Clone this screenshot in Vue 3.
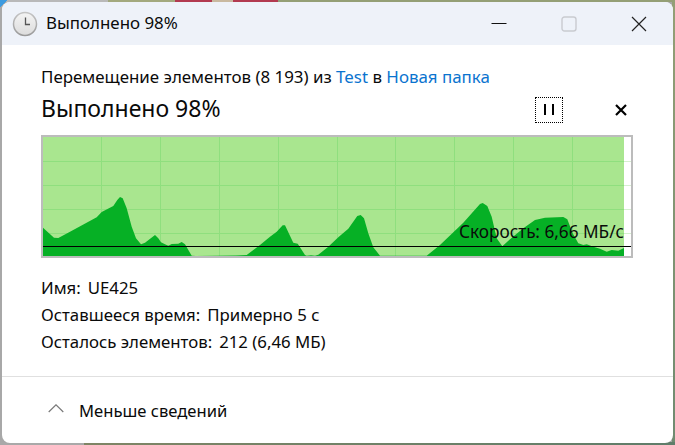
<script setup>
const graphPath =
  "M43 227.7 L54 237.7 L58.3 238 L70 231.7 L96.7 217.3 L101.7 212 L113.3 206 L117.3 200 L120 197 L122.7 198.3 L126.7 208.3 L131.7 226.7 L136 238.3 L141 244.3 L145 242.7 L155 235 L158.3 238.3 L161 242.3 L165 244.3 L168.3 245.7 L171.7 244 L178.3 243.7 L181.7 242 L185 244.3 L191.7 255.7 L196 256 " +
  "L236 255.5 L246.7 255 L260 245 L270 236.7 L276.7 231.7 L282.7 225.3 L285 225.3 L293.3 242.7 L297.7 243.7 L305 255 L306.7 255.7 L311 255.3 L315 255.7 L318.3 254.7 L328.3 246.7 L338.3 237.3 L348.3 228.7 L357.3 216 L360.7 215 L364 218.3 L368.3 233.3 L373.3 247.3 L380 255.7 " +
  "L426.7 255.7 L440 245 L463.3 222.7 L480 204 L482.7 203 L487.3 206 L491.7 216.7 L496.7 238.3 L502.3 246.3 L510 239.3 L523.3 228.3 L535 220 L545 217.7 L563.3 217 L567.3 219.3 L572.7 233.3 L578.3 243.3 L583.3 245 L586.7 244.3 L593.3 246.7 L600 248.7 L606.7 251.7 L611.7 250 L618.3 250.7 L624 248 L624 256 L43 256 Z";

const verticals = [101.5, 160.5, 219.5, 278.5, 337.5, 395.5, 454.5, 513.5, 572.5];
const horizontals = [161.5, 185.5, 209.5, 233.5];
</script>

<template>
  <div class="desktop">
    <div class="window">
      <header class="titlebar">
        <svg class="clock" width="26" height="26" viewBox="0 0 26 26">
          <defs>
            <linearGradient id="rim" x1="0" y1="0" x2="0" y2="1">
              <stop offset="0" stop-color="#c4c4c4" />
              <stop offset="1" stop-color="#9a9a9a" />
            </linearGradient>
            <linearGradient id="face" x1="0" y1="0" x2="0" y2="1">
              <stop offset="0" stop-color="#f4f4f4" />
              <stop offset="1" stop-color="#dcdcdc" />
            </linearGradient>
          </defs>
          <circle cx="13" cy="13" r="11.5" fill="url(#face)" stroke="url(#rim)" stroke-width="1.5" />
          <path d="M13.5 6.5 V13.5 H18" fill="none" stroke="#555" stroke-width="1.3" />
        </svg>
        <span class="title">Выполнено 98%</span>
        <div class="controls">
          <span class="ctl">
            <svg width="16" height="16" viewBox="0 0 16 16"><path d="M0.5 7.5 H15.5" stroke="#111" stroke-width="1" /></svg>
          </span>
          <span class="ctl">
            <svg width="16" height="16" viewBox="0 0 16 16"><rect x="1" y="1" width="14" height="14" rx="2.5" fill="none" stroke="#c9cbd0" stroke-width="1.4" /></svg>
          </span>
          <span class="ctl">
            <svg width="16" height="16" viewBox="0 0 16 16"><path d="M1 1 L15 15 M15 1 L1 15" stroke="#222" stroke-width="1.2" /></svg>
          </span>
        </div>
      </header>

      <main class="content">
        <p class="path">
          Перемещение элементов (8 193) из <a class="link">Test</a> в <a class="link">Новая папка</a>
        </p>
        <div class="status-row">
          <h1 class="status">Выполнено 98%</h1>
          <button class="pause">
            <svg width="10" height="11" viewBox="0 0 10 11"><path d="M1 0 V11 M9 0 V11" stroke="#000" stroke-width="2" /></svg>
          </button>
          <button class="cancel">
            <svg width="12" height="12" viewBox="0 0 12 12"><path d="M1 1 L11 11 M11 1 L1 11" stroke="#000" stroke-width="2.2" /></svg>
          </button>
        </div>

        <div class="graph">
          <svg width="588" height="119" viewBox="43 137 588 119">
            <rect x="43" y="137" width="581" height="119" fill="#a9e68f" />
            <path v-for="y in horizontals" :key="y" :d="`M43 ${y} H624`" stroke="#8fdf7e" stroke-width="1" />
            <path v-for="y in horizontals" :key="'w' + y" :d="`M624 ${y} H631`" stroke="#d6f0d0" stroke-width="1" />
            <path v-for="x in verticals" :key="x" :d="`M${x} 137 V256`" stroke="#8fdf7e" stroke-width="1" />
            <path :d="graphPath" fill="#06b025" />
            <path d="M43 246.5 H631" stroke="#000" stroke-width="1" />
          </svg>
          <span class="speed">Скорость: 6,66 МБ/с</span>
        </div>

        <dl class="details">
          <div class="row"><dt>Имя:</dt><dd>UE425</dd></div>
          <div class="row"><dt>Оставшееся время:</dt><dd>Примерно 5 с</dd></div>
          <div class="row"><dt>Осталось элементов:</dt><dd>212 (6,46 МБ)</dd></div>
        </dl>
      </main>

      <footer class="footer">
        <svg class="chevron" width="16" height="9" viewBox="0 0 16 9"><path d="M0.7 8 L8 0.8 L15.3 8" fill="none" stroke="#7a7a7a" stroke-width="1.2" /></svg>
        <span>Меньше сведений</span>
      </footer>
    </div>
  </div>
</template>

<style>
html,
body {
  margin: 0;
  overflow: hidden;
}
</style>

<style scoped>
.desktop {
  width: 675px;
  height: 445px;
  box-sizing: border-box;
  padding: 2px;
  background:
    linear-gradient(135deg, #3d9be0 0 5px, transparent 5px) 0 0 no-repeat,
    linear-gradient(90deg, #b9b9b9 0 108px, #a3a97e 108px 175px, #b23a50 175px 212px, #c9b9a0 212px 233px, #b23a50 233px 278px, #949f76 278px) 0 0 / 100% 2px no-repeat,
    linear-gradient(90deg, #a9a9a9 0 84px, #7f8565 84px, #5f7d6a 100%) 0 100% / 100% 3px no-repeat,
    linear-gradient(180deg, #949f76, #6f8a70) 100% 0 / 3px 100% no-repeat,
    #a8a8a8;
  font-family: "Noto Sans", "Open Sans", sans-serif;
  color: #0a0a0a;
}
.window {
  width: 671px;
  height: 441px;
  background: #fff;
  border-radius: 8px;
  overflow: hidden;
  display: flex;
  flex-direction: column;
}
.titlebar {
  height: 43px;
  flex: none;
  display: flex;
  align-items: center;
  background: #eef2f9;
  padding-left: 10px;
}
.clock {
  flex: none;
}
.title {
  margin-left: 8px;
  font-size: 16.9px;
  line-height: 20px;
  margin-top: -1px;
}
.controls {
  margin-left: auto;
  display: flex;
  margin-right: 26px;
  gap: 54px;
}
.ctl {
  display: flex;
}
.content {
  flex: 1;
  padding: 20px 39px 0;
}
.path {
  margin: 0;
  font-size: 16.9px;
  line-height: 24px;
  white-space: nowrap;
}
.link {
  color: #0a74cf;
}
.status-row {
  display: flex;
  align-items: center;
  height: 30px;
  margin-top: 4px;
}
.status {
  margin: 0;
  font-size: 23px;
  font-weight: 400;
}
.pause {
  margin-left: auto;
  width: 28px;
  height: 26px;
  padding: 0;
  background: none;
  border: 1px dotted #000;
  display: flex;
  align-items: center;
  justify-content: center;
  margin-top: 3px;
}
.cancel {
  margin-left: 52px;
  margin-right: 7px;
  width: 12px;
  height: 12px;
  padding: 0;
  background: none;
  border: none;
  display: flex;
  margin-top: 3px;
}
.graph {
  position: relative;
  margin-top: 12px;
  width: 588px;
  height: 119px;
  border: 2px solid #bcbcbc;
}
.graph svg {
  display: block;
}
.speed {
  position: absolute;
  right: 7px;
  top: 83px;
  font-size: 17.2px;
  line-height: 24px;
  white-space: nowrap;
}
.details {
  margin: 16px 0 0;
  font-size: 16.8px;
}
.row {
  display: flex;
  gap: 7px;
  height: 27px;
  line-height: 27px;
}
.row dt,
.row dd {
  margin: 0;
}
.footer {
  flex: none;
  height: 67px;
  border-top: 1px solid #e0e0e0;
  display: flex;
  align-items: center;
  padding-left: 46px;
  font-size: 16.6px;
  box-sizing: border-box;
}
.chevron {
  margin-right: 15px;
  margin-top: -3px;
}
</style>
